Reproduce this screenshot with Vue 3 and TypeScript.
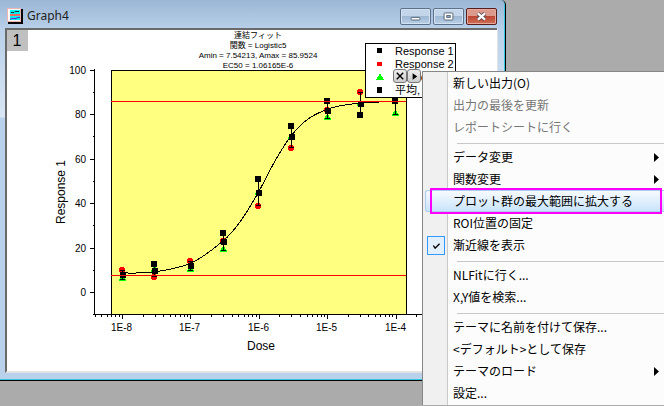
<script setup lang="ts">
interface MenuItem {
  label: string
  disabled?: boolean
  submenu?: boolean
  checked?: boolean
  active?: boolean
}

interface Sample {
  x: number
  black?: number
  red?: number
  green?: number
  mean?: number
  top: number
  bottom: number
}

const menuGroups: MenuItem[][] = [
  [
    { label: '新しい出力(O)' },
    { label: '出力の最後を更新', disabled: true },
    { label: 'レポートシートに行く', disabled: true },
  ],
  [
    { label: 'データ変更', submenu: true },
    { label: '関数変更', submenu: true },
    { label: 'プロット群の最大範囲に拡大する', active: true },
    { label: 'ROI位置の固定' },
    { label: '漸近線を表示', checked: true },
  ],
  [{ label: 'NLFitに行く...' }, { label: 'X,Y値を検索...' }],
  [
    { label: 'テーマに名前を付けて保存...' },
    { label: '<デフォルト>として保存' },
    { label: 'テーマのロード', submenu: true },
    { label: '設定...' },
  ],
]

const titleLines = ['連結フィット', '関数 = Logistic5', 'Amin = 7.54213, Amax = 85.9524', 'EC50 = 1.06165E-6']

// Plot geometry: one y unit step of 20 and one x decade, in drawing units.
const yOf = (value: number): number => Math.round(292 - value * 2.225) + 0.5
const xOf = (decade: number): number => Math.round(122 + decade * 68.4) + 0.5

const yTicks = [0, 20, 40, 60, 80, 100].map((value) => ({ value, y: yOf(value) }))
const yMinor = [-10, 10, 30, 50, 70, 90].map(yOf)
const xTicks = [0, 1, 2, 3, 4].map((decade) => ({ label: `1E-${8 - decade}`, x: xOf(decade) }))
const xMinor: number[] = []
for (let decade = -1; decade <= 4; decade++) {
  for (let m = 2; m <= 9; m++) {
    const x = xOf(decade + Math.log10(m))
    if (x > 94 && x < 424) xMinor.push(x)
  }
}

const samples: Sample[] = [
  { x: 122.5, red: 270, green: 278, mean: 275, top: 270, bottom: 279 },
  { x: 154.5, black: 264, red: 277, green: 269, mean: 271, top: 264, bottom: 276 },
  { x: 190.5, red: 261, green: 269, mean: 266, top: 261, bottom: 270 },
  { x: 223.5, black: 233, red: 241, green: 249, mean: 242, top: 233, bottom: 250 },
  { x: 258.5, black: 179, red: 206, green: 192, mean: 193, top: 179, bottom: 205 },
  { x: 291.5, black: 126, red: 148, green: 136, mean: 137, top: 126, bottom: 147 },
  { x: 327.5, black: 101, red: 110, green: 117, mean: 111, top: 101, bottom: 118 },
  { x: 360.5, black: 115, red: 92, green: 103, mean: 104, top: 92, bottom: 115 },
  { x: 395.5, black: 101, green: 113, top: 101, bottom: 114 },
]

const fit: [number, number][] = [
  [122, 273], [154, 272], [191, 263], [223, 241], [240, 222], [258, 193], [275, 161],
  [291, 136], [308, 119], [328, 109], [345, 105], [361, 103], [379, 102],
]

// Smooth curve through the fitted points.
const curve = fit.slice(0, -1).reduce((d, p1, i) => {
  const p0 = fit[Math.max(0, i - 1)]
  const p2 = fit[i + 1]
  const p3 = fit[Math.min(fit.length - 1, i + 2)]
  const c1 = [p1[0] + (p2[0] - p0[0]) / 6, p1[1] + (p2[1] - p0[1]) / 6]
  const c2 = [p2[0] - (p3[0] - p1[0]) / 6, p2[1] - (p3[1] - p1[1]) / 6]
  return `${d} C${c1} ${c2} ${p2}`
}, `M${fit[0]}`)

const triangle = (x: number, y: number): string => `${x},${y - 4} ${x + 4},${y + 3} ${x - 4},${y + 3}`
</script>

<template>
  <main class="workspace">
    <section class="window">
      <header class="titlebar">
        <svg class="app-icon" viewBox="0 0 16 16" aria-hidden="true">
          <path d="M1 1h15v15H1z" fill="#000" />
          <path d="M0 0h14v14H0z" fill="#fff" />
          <path d="M.5 .5h13v13H.5z" fill="none" stroke="#d66" stroke-dasharray="1 1" />
          <path d="M3 2h10v4H3zM3 8h10v4H3z" fill="#0ee" />
          <path d="M3 7h10" stroke="#e66" stroke-width="2" />
          <path d="M4 4.5h3l1-1h4" fill="none" stroke="#134" />
          <path d="M3 11.5l2-1h4l2-1h2" fill="none" stroke="#62c" />
        </svg>
        <h1>Graph4</h1>
        <div class="window-buttons">
          <button type="button" aria-label="Minimize">
            <svg viewBox="0 0 31 17"><rect x="10.5" y="9.5" width="10" height="3" rx="1" fill="#fff" stroke="#4c5a6c" /></svg>
          </button>
          <button type="button" aria-label="Maximize">
            <svg viewBox="0 0 31 17">
              <rect x="10.5" y="4.5" width="10" height="8" rx="1" fill="#fff" stroke="#4c5a6c" />
              <rect x="13.5" y="7.5" width="4" height="2" fill="#9bb6d4" stroke="#4c5a6c" />
            </svg>
          </button>
          <button type="button" class="close" aria-label="Close">
            <svg viewBox="0 0 31 17">
              <path d="M11.5 5l8 7M19.5 5l-8 7" stroke="#5b4a55" stroke-width="4.5" />
              <path d="M11.5 5l8 7M19.5 5l-8 7" stroke="#fff" stroke-width="2.5" />
            </svg>
          </button>
        </div>
      </header>

      <div class="page">
        <svg class="plot" viewBox="7 30 490 341" role="img" aria-label="Dose response">
          <rect x="7" y="30" width="21" height="21" fill="#c0c0c0" />
          <text x="17" y="46" class="layer">1</text>

          <text v-for="(line, i) in titleLines" :key="line" x="258" :y="38 + i * 10" class="title">{{ line }}</text>

          <rect x="111.5" y="70.5" width="295" height="244" class="area" />

          <g class="axis">
            <path d="M94.5 69V315M93 314.5H440" />
            <path v-for="t in yTicks" :key="t.value" :d="`M90 ${t.y}H94`" />
            <path v-for="y in yMinor" :key="y" :d="`M93 ${y}H94`" />
            <path v-for="t in xTicks" :key="t.label" :d="`M${t.x} 315V319`" />
            <path v-for="x in xMinor" :key="x" :d="`M${x} 315V317`" />
          </g>
          <text v-for="t in yTicks" :key="t.value" x="86" :y="t.y + 3" class="tick end">{{ t.value }}</text>
          <text v-for="t in xTicks" :key="t.label" :x="t.x - 1" y="331" class="tick mid">{{ t.label }}</text>
          <text x="261" y="350" class="label">Dose</text>
          <text transform="translate(65 192) rotate(-90)" class="label">Response 1</text>

          <g v-for="s in samples" :key="s.x">
            <circle v-if="s.red" :cx="s.x - 0.5" :cy="s.red" r="3" class="red" />
            <polygon v-if="s.green" :points="triangle(s.x, s.green)" class="green" />
            <path class="bar" :d="`M${s.x} ${s.top}V${s.bottom}M${s.x - 2.5} ${s.top + 0.5}h5M${s.x - 2.5} ${s.bottom + 0.5}h5`" />
            <rect v-if="s.black" :x="s.x - 3.5" :y="s.black - 3" width="6" height="6" />
            <rect v-if="s.mean" :x="s.x - 2.5" :y="s.mean - 3" width="6" height="6" />
          </g>
          <path :d="curve" class="curve" />
          <path d="M111 101.5H406M111 275.5H406" class="asymptote" />

          <g class="legend">
            <rect x="365.5" y="43.5" width="90" height="54" class="frame" />
            <rect x="377" y="48" width="5" height="5" />
            <circle cx="379.5" cy="64" r="2.5" class="red" />
            <polygon :points="triangle(380, 77)" class="green" />
            <rect x="377" y="87" width="5" height="6" />
            <text x="395" y="55">Response 1</text>
            <text x="395" y="68">Response 2</text>
            <text x="395" y="81">Response 3</text>
            <text x="395" y="94">平均,</text>
          </g>
        </svg>
        <div class="mini-tools">
          <button type="button" aria-label="Remove">
            <svg viewBox="0 0 13 13"><path d="M3 3l7 7M10 3l-7 7" stroke="#000" stroke-width="1.5" /></svg>
          </button>
          <button type="button" aria-label="Options">
            <svg viewBox="0 0 13 13"><path d="M5 3.5v7l5-3.5z" /></svg>
          </button>
        </div>
      </div>
    </section>

    <nav class="menu" aria-label="Graph">
      <template v-for="(group, g) in menuGroups" :key="g">
        <hr v-if="g > 0" />
        <button
          v-for="item in group"
          :key="item.label"
          type="button"
          class="item"
          :class="{ active: item.active }"
          :disabled="item.disabled"
        >
          <span class="gutter">
            <svg v-if="item.checked" class="check" viewBox="0 0 18 18">
              <path d="M6 9l2 3 5-5" fill="none" stroke="#000" stroke-width="1.5" />
            </svg>
          </span>
          <span class="text">{{ item.label }}</span>
          <svg v-if="item.submenu" class="arrow" viewBox="0 0 5 9"><path d="M0 0v9l5-4.5z" /></svg>
        </button>
      </template>
    </nav>
  </main>
</template>

<style>
body {
  margin: 0;
  background: #ababab;
}
</style>

<style scoped>
.workspace {
  position: relative;
  min-height: 100vh;
  overflow: hidden;
  background: #ababab;
  font-family: "Noto Sans CJK JP", sans-serif;
}

button {
  padding: 0;
  font: inherit;
}

.window {
  box-sizing: border-box;
  width: calc(100% - 158px);
  padding: 0 8px 7px 5px;
  border-right: 1px solid #000;
  border-bottom: 1px solid #000;
  border-top-right-radius: 5px;
  background: linear-gradient(#9bb6d4, #b9d1ea 30px, #cfdff1 90px, #d9e6f5 117px, #b9d1ea 118px);
  box-shadow: inset -1px -1px #35c6e0;
}

.titlebar {
  display: flex;
  align-items: center;
  height: 28px;
  padding-left: 2px;
}

.app-icon {
  width: 16px;
  height: 16px;
  margin-top: 4px;
}

h1 {
  flex: 1;
  margin: 4px 0 0 4px;
  color: #222;
  font: 12px/18px "Noto Sans", sans-serif;
}

.window-buttons {
  display: flex;
  gap: 2px;
  margin-top: 5px;
}

.window-buttons button {
  box-sizing: border-box;
  width: 31px;
  height: 17px;
  border: 1px solid #5d718a;
  border-radius: 2px;
  background: linear-gradient(#c3d5e8 45%, #9fb8d3 50%, #b8cfe7);
  box-shadow: inset 0 0 0 1px #d3e2f1;
}

.window-buttons .close {
  border-color: #581d1f;
  background: linear-gradient(#dc9a8c 45%, #bd4634 50%, #ce7054);
  box-shadow: inset 0 0 0 1px #e6aa9c;
}

.window-buttons svg {
  display: block;
  width: 100%;
  height: 100%;
}

.page {
  position: relative;
  border-top: 2px solid #6a6a6a;
  border-left: 2px solid #6a6a6a;
  border-bottom: 2px solid #e3e3e3;
  background: #fff;
  box-shadow: 1px 0 #e3e3e3;
}

.plot {
  display: block;
  width: 100%;
  font-family: "Liberation Sans", "Noto Sans CJK JP", sans-serif;
  shape-rendering: crispEdges;
}

.layer {
  font-size: 16px;
  text-anchor: middle;
}

.title {
  font-size: 8px;
  text-anchor: middle;
}

.tick {
  font-size: 10px;
}

.end {
  text-anchor: end;
}

.mid {
  text-anchor: middle;
}

.label {
  font-size: 12px;
  text-anchor: middle;
}

.area {
  fill: #ffff80;
  stroke: #000;
}

.axis path,
.bar {
  stroke: #000;
}

.curve {
  fill: none;
  stroke: #000;
}

.asymptote {
  stroke: #f00;
}

.red {
  fill: #f00;
}

.green {
  fill: #0f0;
}

.legend {
  font-size: 11px;
}

.frame {
  fill: #fff;
  stroke: #000;
}

.mini-tools {
  position: absolute;
  top: 39px;
  left: 386px;
  display: flex;
}

.mini-tools button {
  box-sizing: border-box;
  width: 14px;
  height: 14px;
  border: 1px solid #777;
  border-radius: 3px;
  background: linear-gradient(#eee, #ccc);
}

.mini-tools svg {
  display: block;
  width: 100%;
}

.menu {
  position: absolute;
  top: 71px;
  right: 0;
  box-sizing: border-box;
  width: 242px;
  padding-bottom: 1px;
  border: solid #868686;
  border-width: 1px 0 0 1px;
  background: linear-gradient(90deg, #f0f0f0 24px, #c9c9c9 24px, #c9c9c9 25px, #fcfcfc 25px);
}

hr {
  height: 1px;
  margin: 5px 0 2px 34px;
  border: 0;
  background: #c8c8c8;
}

.item {
  position: relative;
  display: flex;
  align-items: center;
  width: 100%;
  height: 22px;
  border: 0;
  background: none;
  color: #000;
  font-size: 12px;
  line-height: 22px;
  text-align: left;
}

.item:disabled {
  color: #777;
}

.gutter {
  display: flex;
  width: 30px;
  padding-left: 4px;
  box-sizing: border-box;
}

.text {
  flex: 1;
}

.check {
  box-sizing: border-box;
  width: 18px;
  height: 19px;
  border: 1px solid #3399ff;
  background: #e3effb;
}

.arrow {
  width: 5px;
  height: 9px;
  margin-right: 5px;
}

.active::before {
  position: absolute;
  inset: 0 0 0 2px;
  box-sizing: border-box;
  border: 1px solid #aeccee;
  border-right: 0;
  border-radius: 3px 0 0 3px;
  background: linear-gradient(#f7fafe, #c9e4fa);
  content: "";
}

.active::after {
  position: absolute;
  inset: -2px 2px -2px 7px;
  border: 2px solid #f0f;
  content: "";
}

.active .text {
  position: relative;
}
</style>
